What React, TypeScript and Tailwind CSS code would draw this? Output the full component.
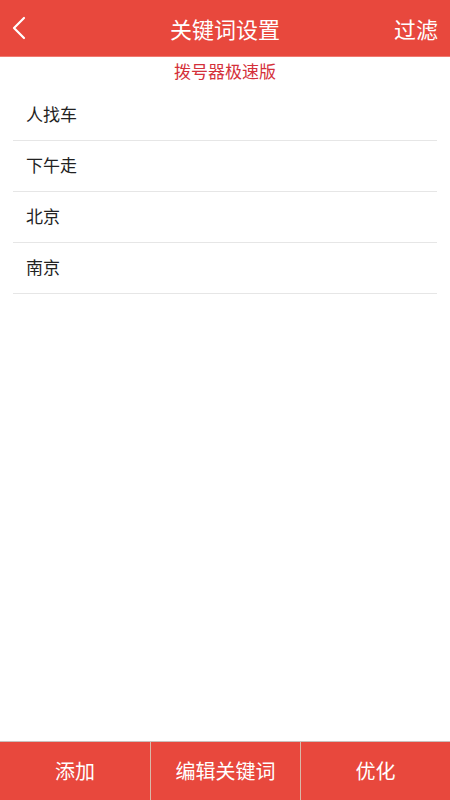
const keywords = ["人找车", "下午走", "北京", "南京"];

export default function App() {
  return (
    <div
      className="flex h-[800px] w-[450px] flex-col bg-white"
      style={{ fontFamily: '"Noto Sans CJK SC", "Noto Sans", sans-serif' }}
    >
      <header className="grid h-[57px] shrink-0 grid-cols-[1fr_auto_1fr] items-center border-b border-[#f07a70] bg-[#e8483d] px-3 text-white">
        <svg width="14" height="24" viewBox="0 0 14 24" fill="none">
          <path d="M12 2 L2 12 L12 22" stroke="white" strokeWidth="2.2" strokeLinecap="round" strokeLinejoin="round" />
        </svg>
        <h1 className="text-[22px] leading-none">关键词设置</h1>
        <span className="justify-self-end text-[22px] leading-none">过滤</span>
      </header>

      <p className="pt-[2px] pb-[4px] text-center text-[17px] leading-[24px] text-[#d4303a]">拨号器极速版</p>

      <ul className="px-[13px] pt-[3px]">
        {keywords.map((k) => (
          <li
            key={k}
            className="flex h-[51px] items-center border-b border-[#e6e6e6] px-[13px] pb-[2px] text-[17px] text-[#222]"
          >
            {k}
          </li>
        ))}
      </ul>

      <div className="flex-1" />

      <footer className="grid h-[59px] shrink-0 grid-cols-3 border-t border-[#c9c0bc] bg-[#e8483d] text-[20px] text-white">
        <button className="flex items-center justify-center">添加</button>
        <button className="flex items-center justify-center border-l border-[#d9b8a8]">编辑关键词</button>
        <button className="flex items-center justify-center border-l border-[#d9b8a8]">优化</button>
      </footer>
    </div>
  );
}
